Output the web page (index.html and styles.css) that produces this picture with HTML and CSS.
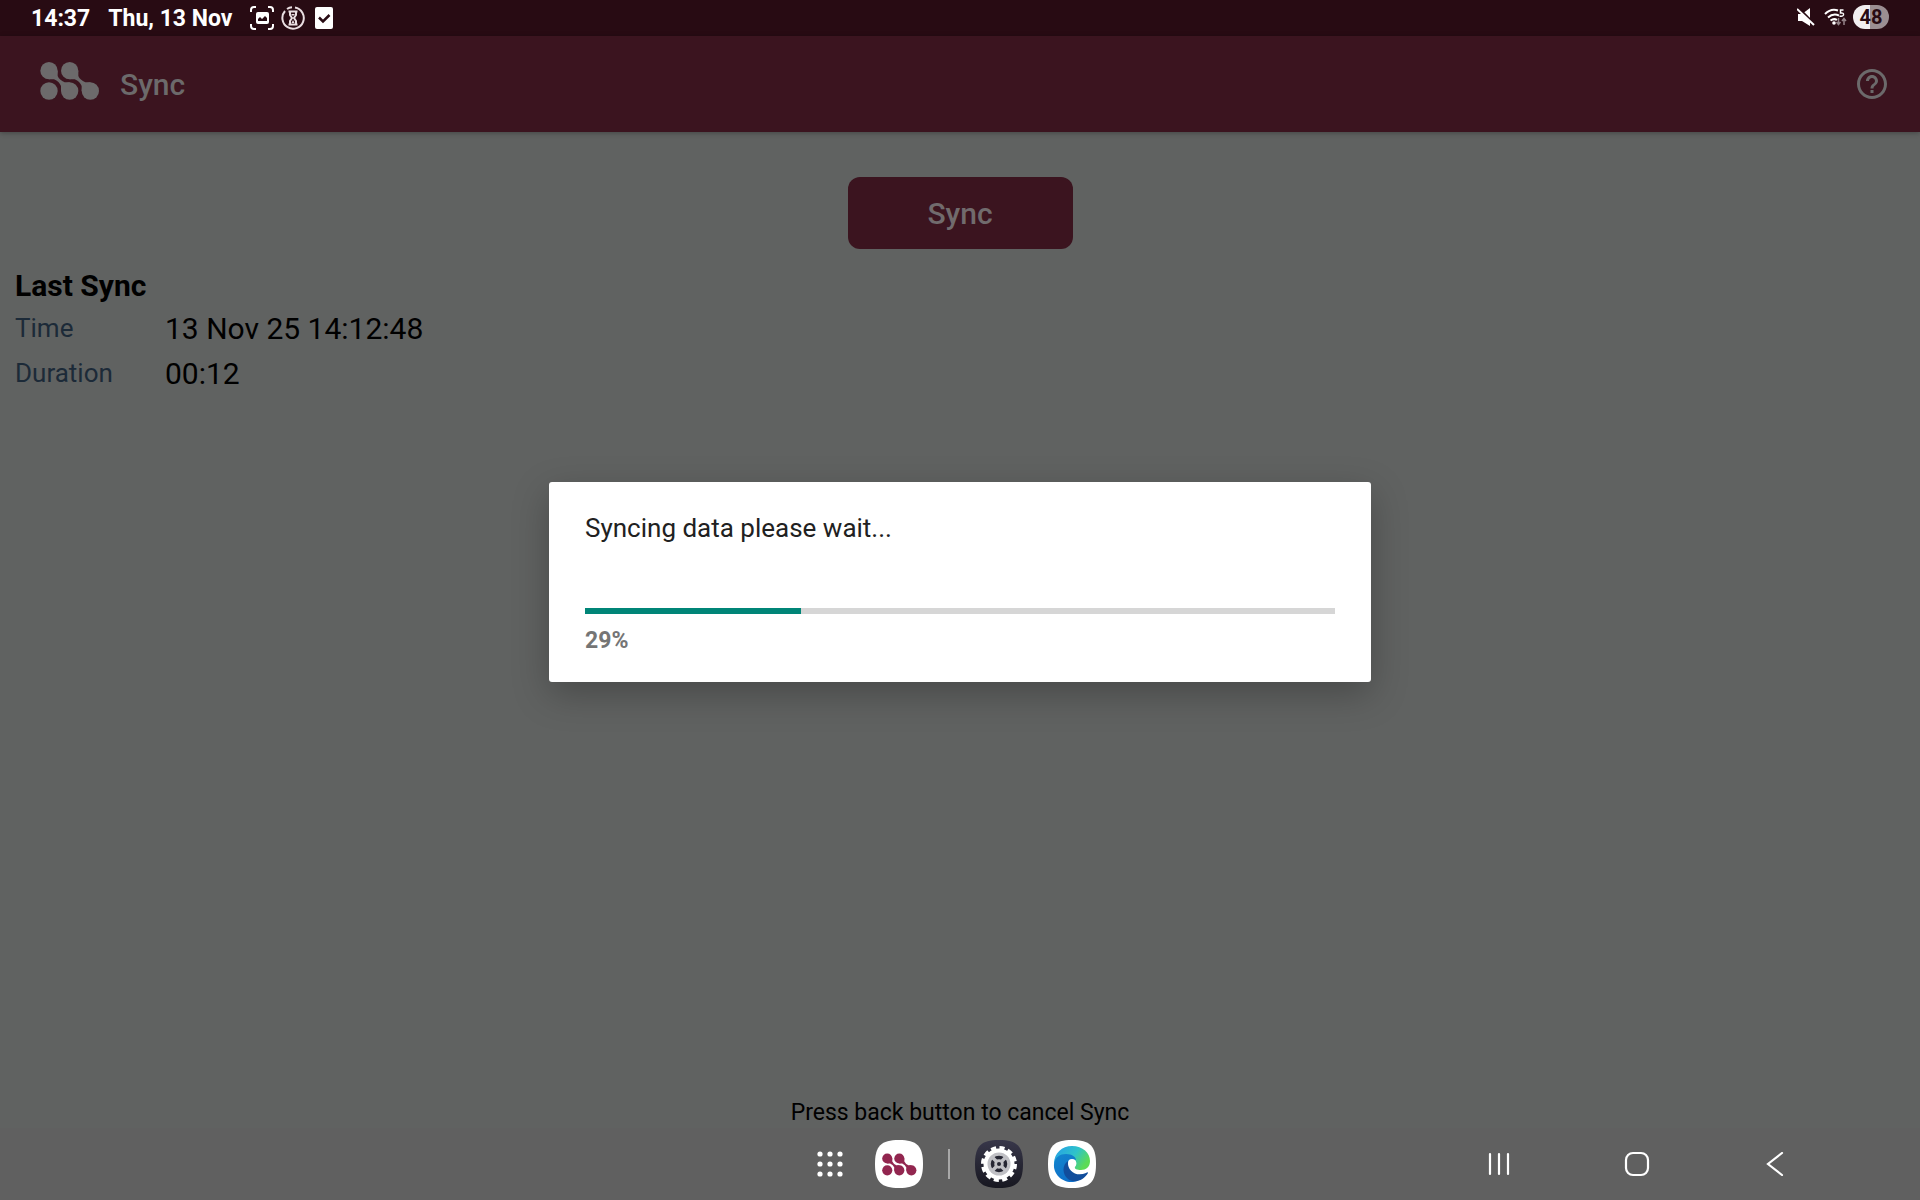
FILE: index.html
```html
<!DOCTYPE html>
<html lang="en">
<head>
  <meta charset="UTF-8">
  <meta name="viewport" content="width=device-width, initial-scale=1.0">
  <title>Sync</title>
  <link rel="stylesheet" href="styles.css">
</head>
<body>
  <!-- Shared logo shape -->
  <svg class="defs" width="0" height="0" aria-hidden="true">
    <defs>
      <g id="logo">
        <circle cx="27" cy="26" r="26"/>
        <circle cx="89" cy="26" r="26"/>
        <circle cx="27" cy="87" r="26"/>
        <circle cx="89" cy="87" r="26"/>
        <circle cx="151" cy="87" r="26"/>
        <path d="M27 26H53V42Q58 54 74 61H89V87H63V72Q58 59 42 52H27Z"/>
        <path d="M89 26H115V42Q120 54 136 61H151V87H125V72Q120 59 104 52H89Z"/>
      </g>
    </defs>
  </svg>

  <!-- Status bar -->
  <div class="status-bar">
    <div class="status-left">
      <span>14:37</span>
      <span>Thu, 13 Nov</span>
      <div class="status-icons">
        <svg width="24" height="24" viewBox="0 0 24 24">
          <path d="M1 6V4Q1 1 4 1H6M18 1H20Q23 1 23 4V6M23 18V20Q23 23 20 23H18M6 23H4Q1 23 1 20V18" fill="none" stroke="#fff" stroke-width="2"/>
          <rect x="6" y="6" width="13" height="12" rx="2" fill="#fff"/>
          <path d="M8 15V13L10 11L12 13L15 10L17 12V15Z" fill="#280b13"/>
        </svg>
        <svg width="24" height="24" viewBox="0 0 24 24" fill="none" stroke="#eadfe2">
          <path d="M14 1.500A10.700 10.700 0 1 1 4 5M6 3A10.700 10.700 0 0 1 11 1.300" stroke-width="2"/>
          <path d="M7.500 5.500H16.500M7.500 18.500H16.500M9 6V9L11 12L9 15V18M15 6V9L13 12L15 15V18" stroke-width="2"/>
          <path d="M10 8H14L12 10ZM10.500 17L12 14L13.500 17Z" fill="#eadfe2" stroke="none"/>
        </svg>
        <svg width="24" height="24" viewBox="0 0 24 24">
          <rect x="3" y="1" width="18" height="22" rx="2" fill="#fff"/>
          <path d="M7 11.500L11 15.500L17.500 9" fill="none" stroke="#280b13" stroke-width="2.500"/>
        </svg>
      </div>
    </div>
    <div class="status-right">
      <svg width="21" height="18" viewBox="0 0 21 18">
        <path d="M1 6H5L13 0V18L5 13H1Z" fill="#fff"/>
        <path d="M1 0L18 17" stroke="#280b13" stroke-width="3"/>
        <path d="M0 1L17 17" stroke="#fff" stroke-width="2"/>
      </svg>
      <svg width="23" height="18" viewBox="0 0 23 18">
        <g fill="none" stroke="#fff" stroke-width="2">
          <path d="M1 6Q7 0 14 2.500"/>
          <path d="M4 9.500Q9 5 15 7.500"/>
          <path d="M6.500 12.500Q10 10 13 12"/>
          <path d="M19.500 2H16.500V5Q20 4.500 19.500 7Q18.500 9 15.500 8" stroke-width="1.500"/>
        </g>
        <circle cx="10" cy="15" r="1.800" fill="#fff"/>
        <path d="M14.500 10V16M12.500 14L14.500 16.500L16.500 14M20 17V11M18 13L20 10.500L22 13" fill="none" stroke="#95858a" stroke-width="1.500"/>
      </svg>
      <span class="battery">48</span>
    </div>
  </div>

  <!-- App -->
  <div class="app">
    <header class="app-bar">
      <svg width="60" height="45" viewBox="0 0 180 135" fill="#6c6a6b"><use href="#logo"/></svg>
      <h1>Sync</h1>
      <button class="help" aria-label="Help">
        <svg width="36" height="36" viewBox="0 0 24 24" fill="#6c6a6b">
          <path d="M11 18h2v-2h-2v2zm1-16C6.480 2 2 6.480 2 12s4.480 10 10 10 10-4.480 10-10S17.520 2 12 2zm0 18c-4.410 0-8-3.590-8-8s3.590-8 8-8 8 3.590 8 8-3.590 8-8 8zm0-14c-2.210 0-4 1.790-4 4h2c0-1.100.900-2 2-2s2 .900 2 2c0 2-3 1.750-3 5h2c0-2.250 3-2.500 3-5 0-2.210-1.790-4-4-4z"/>
        </svg>
      </button>
    </header>

    <main class="content">
      <button class="sync-button">Sync</button>
      <section class="last-sync">
        <h2>Last Sync</h2>
        <dl>
          <dt>Time</dt>
          <dd>13 Nov 25 14:12:48</dd>
          <dt>Duration</dt>
          <dd>00:12</dd>
        </dl>
      </section>
      <p class="hint">Press back button to cancel Sync</p>
    </main>

    <!-- Progress dialog -->
    <div class="overlay">
      <div class="dialog" role="dialog" aria-labelledby="message">
        <label id="message" for="progress">Syncing data please wait...</label>
        <progress id="progress" value="216" max="750"></progress>
        <span class="percent">29%</span>
      </div>
    </div>
  </div>

  <!-- Taskbar -->
  <nav class="taskbar">
    <div class="dock">
      <button aria-label="Apps">
        <svg width="26" height="26" viewBox="0 0 26 26" fill="#fff">
          <circle cx="3" cy="3" r="2.600"/><circle cx="13" cy="3" r="2.600"/><circle cx="23" cy="3" r="2.600"/>
          <circle cx="3" cy="13" r="2.600"/><circle cx="13" cy="13" r="2.600"/><circle cx="23" cy="13" r="2.600"/>
          <circle cx="3" cy="23" r="2.600"/><circle cx="13" cy="23" r="2.600"/><circle cx="23" cy="23" r="2.600"/>
        </svg>
      </button>
      <button class="dock-logo" aria-label="Sync app">
        <svg width="48" height="48" viewBox="0 0 48 48">
          <path d="M24 0C42 0 48 6 48 24S42 48 24 48 0 42 0 24 6 0 24 0Z" fill="#fff"/>
          <svg x="7" y="13" width="35" height="23" viewBox="0 0 180 114" fill="#92264f"><use href="#logo"/></svg>
        </svg>
      </button>
      <span class="divider"></span>
      <button aria-label="Settings">
        <svg width="48" height="48" viewBox="0 0 48 48">
          <defs>
            <linearGradient id="dark" x1="0" y1="0" x2="0" y2="1">
              <stop offset="0" stop-color="#38374a"/>
              <stop offset="1" stop-color="#171720"/>
            </linearGradient>
          </defs>
          <path d="M24 0C42 0 48 6 48 24S42 48 24 48 0 42 0 24 6 0 24 0Z" fill="url(#dark)"/>
          <circle cx="24" cy="24" r="15.500" fill="#fff"/>
          <circle cx="24" cy="24" r="16" fill="none" stroke="#fff" stroke-width="4" stroke-dasharray="5 3.378"/>
          <circle cx="24" cy="24" r="11.500" fill="#c0c0c5"/>
          <circle cx="24" cy="24" r="6.500" fill="none" stroke="#262633" stroke-width="3.500"/>
          <path d="M17 17L31 31M31 17L17 31" stroke="#c0c0c5" stroke-width="3.500"/>
          <circle cx="24" cy="24" r="3.500" fill="#c0c0c5"/>
          <circle cx="24" cy="24" r="2" fill="#262633"/>
        </svg>
      </button>
      <button aria-label="Edge">
        <svg width="48" height="48" viewBox="0 0 48 48">
          <defs>
            <linearGradient id="wave" x1="0" y1="0" x2="1" y2="0.500">
              <stop offset="0.200" stop-color="#28a9df"/>
              <stop offset="0.600" stop-color="#2fc3c9"/>
              <stop offset="1" stop-color="#5cdb55"/>
            </linearGradient>
            <linearGradient id="deep" x1="0" y1="0" x2="0.500" y2="1">
              <stop offset="0" stop-color="#1386ce"/>
              <stop offset="1" stop-color="#0e6fc8"/>
            </linearGradient>
          </defs>
          <path d="M24 0C42 0 48 6 48 24S42 48 24 48 0 42 0 24 6 0 24 0Z" fill="#fff"/>
          <path d="M6 24C6 13 14 6 24 6C35 6 42 13 42 21C42 27 38 30 33 30C29 30 26 29 27 27C31 22 26 18 21 18C13 18 8 22 6 24Z" fill="url(#wave)"/>
          <path d="M6 24C7 17 12 14 18 14C24 14 28 17 28 20C23 19 20 22 20 27C20 34 26 39 31 40C28 42 24 42 23 42C14 42 5 34 6 24Z" fill="url(#deep)"/>
          <path d="M20 21C14 25 14 34 20 39C27 44 36 40 40 33C40 32 39 32 38 33C29 37 19 32 20 21Z" fill="#114d9c"/>
          <circle cx="24" cy="23" r="4" fill="#fff"/>
        </svg>
      </button>
    </div>
    <div class="nav-keys">
      <button aria-label="Recents">
        <svg width="24" height="24" viewBox="0 0 24 24" stroke="#fff" stroke-width="2.200" stroke-linecap="round">
          <path d="M3 2V22M12 2V22M21 2V22"/>
        </svg>
      </button>
      <button aria-label="Home">
        <svg width="26" height="26" viewBox="0 0 26 26" fill="none" stroke="#fff" stroke-width="2.200">
          <rect x="2" y="2" width="22" height="22" rx="7"/>
        </svg>
      </button>
      <button aria-label="Back">
        <svg width="24" height="24" viewBox="0 0 24 24" fill="none" stroke="#fff" stroke-width="2.200" stroke-linecap="round">
          <path d="M19 1L5 12L19 23"/>
        </svg>
      </button>
    </div>
  </nav>
</body>
</html>
```

FILE: styles.css
```css
* {
  box-sizing: border-box;
}
body {
  margin: 0;
  min-height: 100vh;
  display: flex;
  flex-direction: column;
  font-family: Roboto, sans-serif;
  background-color: #606261;
  color: #000;
}
h1, h2, p, dl, dd {
  margin: 0;
}
button {
  padding: 0;
  border: none;
  background: none;
  font-family: inherit;
  cursor: pointer;
}
svg {
  display: block;
}
.defs {
  position: absolute;
}

/* Status bar */
.status-bar {
  display: flex;
  justify-content: space-between;
  height: 36px;
  padding: 0 31px;
  background-color: #280b13;
  color: #fff;
  font-size: 23px;
  font-weight: 700;
}
.status-left, .status-right {
  display: flex;
  align-items: center;
}
.status-left {
  gap: 18px;
}
.status-icons {
  display: flex;
  gap: 7px;
}
.status-right {
  gap: 6px;
  padding-bottom: 3px;
}
.battery {
  width: 36px;
  border-radius: 12px;
  background: linear-gradient(to right, #f1eef0 48%, #9b8e92 48%);
  color: #280b13;
  font-size: 20px;
  line-height: 24px;
  text-align: center;
}

/* App */
.app {
  position: relative;
  flex: 1;
  display: flex;
  flex-direction: column;
}
.app-bar {
  display: flex;
  align-items: center;
  gap: 20px;
  height: 96px;
  padding: 0 30px 0 40px;
  background-color: #3b141f;
  box-shadow: 0 1px 5px rgba(0, 0, 0, 0.3);
  color: #6c6a6b;
}
.app-bar h1 {
  font-size: 30px;
  font-weight: 500;
}
.help {
  margin-left: auto;
}
.content {
  flex: 1;
  display: flex;
  flex-direction: column;
  padding: 45px 15px 0;
}
.sync-button {
  align-self: center;
  width: 225px;
  height: 72px;
  border-radius: 12px;
  background-color: #3b141f;
  color: #716b6d;
  font-size: 30px;
  font-weight: 500;
}
.last-sync {
  margin-top: 18px;
}
.last-sync h2 {
  margin-bottom: 2px;
  font-size: 30px;
  line-height: 37px;
}
.last-sync dl {
  display: grid;
  grid-template-columns: 150px 1fr;
  align-items: center;
  line-height: 45px;
}
.last-sync dt {
  color: #1c2a38;
  font-size: 26px;
}
.last-sync dd {
  font-size: 30px;
}
.hint {
  margin-top: auto;
  font-size: 23px;
  line-height: 30px;
  text-align: center;
}

/* Progress dialog */
.overlay {
  position: absolute;
  inset: 0;
  display: flex;
  align-items: center;
  justify-content: center;
}
.dialog {
  display: flex;
  flex-direction: column;
  width: 822px;
  max-width: 90%;
  padding: 30px 36px 27px;
  border-radius: 3px;
  background-color: #fff;
  box-shadow: 0 12px 36px rgba(0, 0, 0, 0.25);
}
.dialog label {
  color: #212121;
  font-size: 26px;
  line-height: 32px;
}
.dialog progress {
  appearance: none;
  width: 100%;
  height: 6px;
  margin: 64px 0 12px;
  border: none;
}
.dialog progress::-webkit-progress-bar {
  background-color: #d6d6d6;
}
.dialog progress::-webkit-progress-value {
  background-color: #008577;
}
.percent {
  color: #757575;
  font-size: 23px;
  font-weight: 700;
  line-height: 29px;
}

/* Taskbar */
.taskbar {
  display: grid;
  grid-template-columns: 1fr auto 1fr;
  align-items: center;
  height: 72px;
  background-color: #606060;
}
.dock {
  grid-column: 2;
  display: flex;
  align-items: center;
  gap: 25px;
  padding-right: 7px;
}
.dock-logo {
  margin-left: 7px;
}
.divider {
  width: 2px;
  height: 30px;
  background-color: #a8a8a8;
}
.nav-keys {
  display: flex;
  justify-content: flex-end;
  padding-right: 76px;
}
.nav-keys button {
  display: flex;
  justify-content: center;
  align-items: center;
  width: 138px;
  height: 72px;
}
```
